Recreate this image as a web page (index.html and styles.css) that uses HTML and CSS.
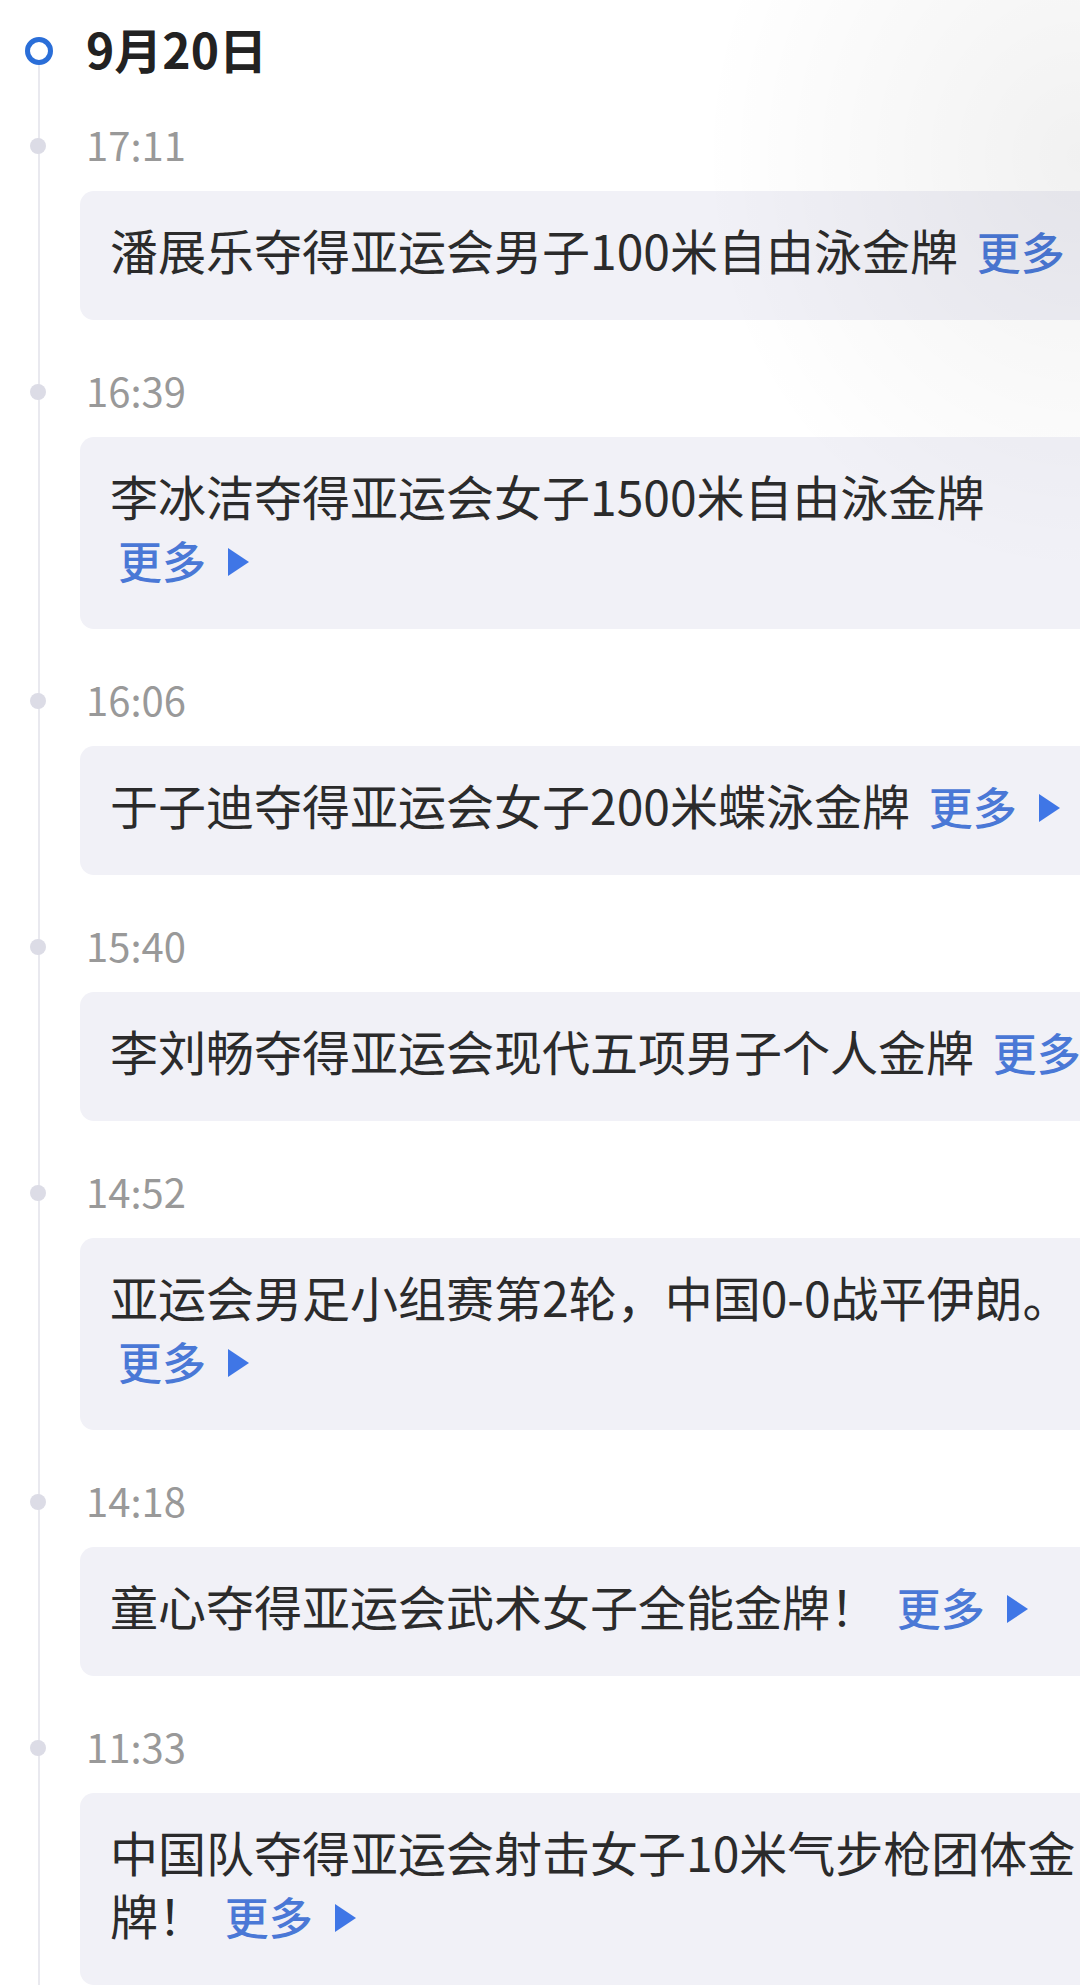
FILE: index.html
```html
<!DOCTYPE html>
<html lang="zh-CN">
<head>
<meta charset="UTF-8">
<meta name="viewport" content="width=device-width, initial-scale=1.0">
<title>亚运会金牌快讯</title>
<link rel="stylesheet" href="styles.css">
</head>
<body>

<div class="timeline">
    <!-- Day header -->
    <div class="day">
        <span class="day-dot"></span>
        <h2>9月20日</h2>
    </div>

    <div class="item">
        <div class="time">17:11</div>
        <div class="card">潘展乐夺得亚运会男子100米自由泳金牌 <a class="more" href="#">更多</a></div>
    </div>

    <div class="item">
        <div class="time">16:39</div>
        <div class="card">李冰洁夺得亚运会女子1500米自由泳金牌 <a class="more" href="#">更多</a></div>
    </div>

    <div class="item">
        <div class="time">16:06</div>
        <div class="card">于子迪夺得亚运会女子200米蝶泳金牌 <a class="more" href="#">更多</a></div>
    </div>

    <div class="item">
        <div class="time">15:40</div>
        <div class="card">李刘畅夺得亚运会现代五项男子个人金牌 <a class="more" href="#">更多</a></div>
    </div>

    <div class="item">
        <div class="time">14:52</div>
        <div class="card">亚运会男足小组赛第2轮，中国0-0战平伊朗。 <a class="more" href="#">更多</a></div>
    </div>

    <div class="item">
        <div class="time">14:18</div>
        <div class="card">童心夺得亚运会武术女子全能金牌！ <a class="more" href="#">更多</a></div>
    </div>

    <div class="item">
        <div class="time">11:33</div>
        <div class="card">中国队夺得亚运会射击女子10米气步枪团体金牌！ <a class="more" href="#">更多</a></div>
    </div>
</div>

</body>
</html>
```

FILE: styles.css
```css
body {
    margin: 0;
    padding: 0;
    background-color: #fff;
    font-family: "Noto Sans CJK SC", "Noto Sans", sans-serif;
    color: #2b2b2b;
    overflow-x: hidden;
    position: relative;
}

/* soft shade in the top right corner */
body::after {
    content: '';
    position: absolute;
    top: 0;
    right: 0;
    width: 480px;
    height: 560px;
    background: radial-gradient(ellipse 380px 420px at 100% 28%, rgba(0, 0, 0, 0.055), rgba(0, 0, 0, 0));
    pointer-events: none;
}

.timeline {
    position: relative;
    padding: 28px 0 0 80px;
}

/* vertical line */
.timeline::before {
    content: '';
    position: absolute;
    left: 38px;
    top: 62px;
    bottom: 0;
    width: 2px;
    background-color: #e9e9ef;
}

.day {
    display: flex;
    align-items: center;
    height: 46px;
}

.day-dot {
    position: absolute;
    left: 25px;
    top: 37px;
    width: 18px;
    height: 18px;
    border: 5px solid #2a6ed8;
    border-radius: 50%;
    background-color: #fff;
}

.day h2 {
    margin: -6px 0 0 6px;
    font-size: 48px;
    line-height: 46px;
    font-weight: 700;
    color: #222;
}

.item {
    margin-top: 47px;
}

.time {
    position: relative;
    height: 50px;
    line-height: 46px;
    padding-left: 6px;
    font-size: 40px;
    color: #999;
}

/* small grey dot on the line */
.time::before {
    content: '';
    position: absolute;
    left: -50px;
    top: 17px;
    width: 16px;
    height: 16px;
    border-radius: 50%;
    background-color: #dcdce6;
}

.card {
    margin-top: 20px;
    width: 1018px;
    padding: 27px 32px 37px 30px;
    background-color: #f1f1f7;
    border-radius: 14px;
    font-size: 48px;
    line-height: 63px;
}

.more {
    display: inline-block;
    padding-left: 8px;
    font-size: 44px;
    font-weight: 500;
    color: #4a78d6;
    text-decoration: none;
    white-space: nowrap;
}

/* blue play arrow after the link */
.more::after {
    content: '';
    display: inline-block;
    margin-left: 22px;
    vertical-align: 3px;
    border-left: 21px solid #3f76e6;
    border-top: 14px solid transparent;
    border-bottom: 14px solid transparent;
}
```
